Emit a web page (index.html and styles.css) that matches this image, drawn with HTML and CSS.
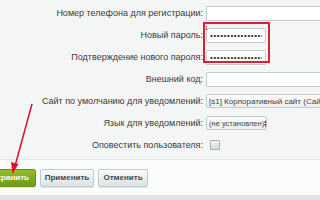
FILE: index.html
```html
<!DOCTYPE html>
<html>
<head>
<meta charset="utf-8">
<link rel="stylesheet" href="styles.css">
</head>
<body>
<div class="page">
  <div class="form">
    <div class="row"><label class="lbl">Номер телефона для регистрации:</label><div class="field"><input class="inp wide" type="text"></div></div>
    <div class="row"><label class="lbl">Новый пароль:<sup class="req">1</sup></label><div class="field"><input class="inp short pw" type="text" value="••••••••••••••••"></div></div>
    <div class="row"><label class="lbl">Подтверждение нового пароля:</label><div class="field"><input class="inp short pw" type="text" value="••••••••••••••••"></div></div>
    <div class="row"><label class="lbl">Внешний код:</label><div class="field"><input class="inp wide" type="text"></div></div>
    <div class="row"><label class="lbl">Сайт по умолчанию для уведомлений:</label><div class="field"><div class="sel wide">[s1] Корпоративный сайт (Сайт</div></div></div>
    <div class="row"><label class="lbl">Язык для уведомлений:</label><div class="field"><div class="sel lang"><span class="val">(не установлен)</span><span class="arr"></span></div></div></div>
    <div class="row"><label class="lbl">Оповестить пользователя:</label><div class="field"><span class="chk"></span></div></div>
  </div>
  <div class="buttons">
    <button class="btn save">Сохранить</button>
    <button class="btn apply">Применить</button>
    <button class="btn cancel">Отменить</button>
  </div>
  <div class="footer"></div>
  <div class="redbox"></div>
  <svg class="arrow" width="40" height="80" viewBox="0 0 40 80">
    <line x1="32" y1="4" x2="15" y2="66" stroke="#e0102a" stroke-width="1.5"/>
    <polygon points="12.5,74 11,62 18.5,64" fill="#e0102a"/>
  </svg>
</div>
</body>
</html>
```
FILE: styles.css
```css
html, body { margin: 0; padding: 0; }
body { background: #f4f6f6; font-family: "Liberation Sans", Arial, sans-serif; font-size: 9px; color: #3a3a3a; overflow: hidden; }
.page { position: relative; width: 320px; height: 200px; overflow: hidden; }
.form { display: flex; flex-direction: column; padding-top: 2px; height: 157px; border-bottom: 1px solid #e6eaeb; }
.row { display: grid; grid-template-columns: 203px 1fr; column-gap: 3px; align-items: center; height: 22px; }
.lbl { text-align: right; white-space: nowrap; position: relative; }
.req { color: #e0102a; font-size: 6px; position: absolute; top: -5px; right: -5px; }
.field { display: flex; align-items: center; white-space: nowrap; overflow: hidden; }
.inp { box-sizing: border-box; height: 15px; border: 1px solid #c3cbcf; border-radius: 1px; background: #fff; font-family: "Liberation Sans", Arial, sans-serif; font-size: 8px; padding: 0 3px; color: #333; margin: 0; }
.pw { letter-spacing: 0.6px; padding-left: 3px; color: #2a2a2a; }
.wide { width: 150px; flex: none; }
.short { width: 60px; flex: none; }
.sel { box-sizing: border-box; height: 14px; border: 1px solid #c3cbcf; border-radius: 2px; background: linear-gradient(#fdfdfd, #eceeee); padding: 0 2px; font-size: 8px; color: #444; display: flex; align-items: center; overflow: hidden; }
.sel.lang { width: 61px; flex: none; justify-content: space-between; padding: 0 3px 0 2px; }
.val { font-size: 7.5px; white-space: nowrap; }
.arr { display: flex; flex-direction: column; gap: 1px; }
.arr::before { content: ""; border-left: 2px solid transparent; border-right: 2px solid transparent; border-bottom: 3px solid #333; }
.arr::after { content: ""; border-left: 2px solid transparent; border-right: 2px solid transparent; border-top: 3px solid #333; }
.chk { width: 8px; height: 8px; margin-left: 4px; border: 1px solid #a8b0b3; border-radius: 1px; background: linear-gradient(#f4f4f4, #d6d9da); }
.buttons { display: flex; gap: 4px; background: #fbfcfc; height: 35px; align-items: center; margin-left: -20px; }
.btn { box-sizing: border-box; height: 18px; border: 1px solid #c1c8cb; border-radius: 2px; background: linear-gradient(#fafbfb, #dde2e4); font-family: "Liberation Sans", Arial, sans-serif; font-weight: bold; font-size: 8px; color: #3b4a55; padding: 0; box-shadow: 0 1px 1px rgba(0,0,0,0.1); text-align: center; }
.btn.save { background: linear-gradient(#95bd2e, #6e9a1a); border-color: #6a8f1e; color: #fff; width: 56px; text-align: right; padding-right: 6px; }
.btn.apply { width: 54px; }
.btn.cancel { width: 50px; }
.footer { height: 7px; background: #dfe4e6; }
.redbox { position: absolute; left: 203px; top: 22px; width: 67px; height: 41px; border: 2px solid #dd1f35; box-sizing: border-box; }
.arrow { position: absolute; left: 0; top: 100px; overflow: visible; }
```
